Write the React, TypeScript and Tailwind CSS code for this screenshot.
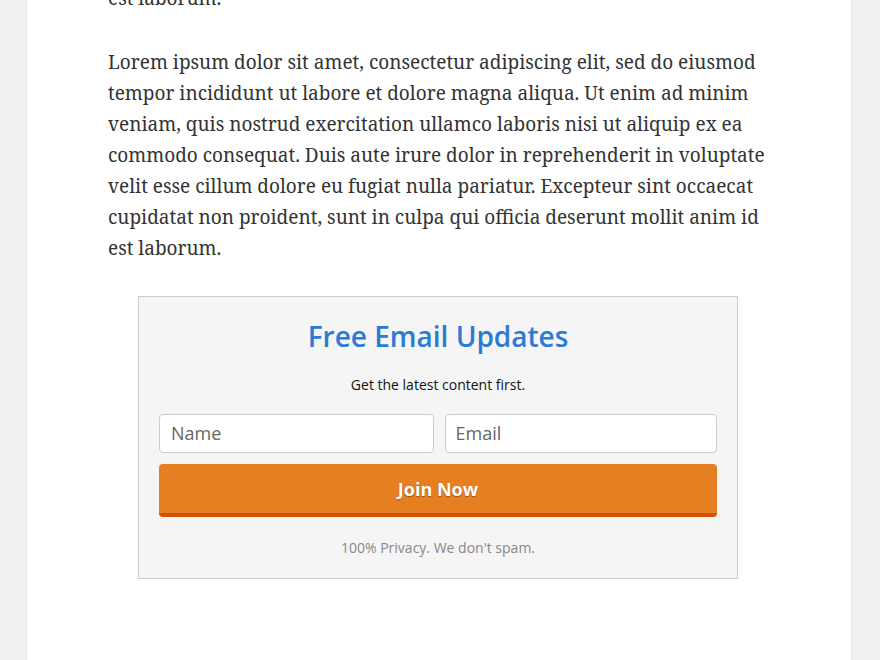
import React from "react";

const lines1 = ["est laborum."];
const lines2 = [
  "Lorem ipsum dolor sit amet, consectetur adipiscing elit, sed do eiusmod",
  "tempor incididunt ut labore et dolore magna aliqua. Ut enim ad minim",
  "veniam, quis nostrud exercitation ullamco laboris nisi ut aliquip ex ea",
  "commodo consequat. Duis aute irure dolor in reprehenderit in voluptate",
  "velit esse cillum dolore eu fugiat nulla pariatur. Excepteur sint occaecat",
  "cupidatat non proident, sunt in culpa qui officia deserunt mollit anim id",
  "est laborum.",
];

function Para({ lines, className }: { lines: string[]; className?: string }) {
  return (
    <p className={"whitespace-nowrap " + (className ?? "")}>
      {lines.map((l, i) => (
        <React.Fragment key={i}>
          {l}
          {i < lines.length - 1 && <br />}
        </React.Fragment>
      ))}
    </p>
  );
}

export default function App() {
  return (
    <div className="h-[660px] w-[880px] overflow-hidden bg-[#f1f1f1]">
      <div className="ml-[26px] flow-root h-[660px] w-[825px] border-l border-[#e6e6e6] bg-white pl-[81px] pr-[83px] shadow-[1px_0_0_#e8e8e8]">
        <div
          className="mt-[-17px] text-[19px] leading-[31px] text-[#333]"
          style={{ fontFamily: '"Noto Serif", "DejaVu Serif", serif' }}
        >
          <Para lines={lines1} className="mb-[33px]" />
          <Para lines={lines2} className="mb-[32px]" />
        </div>
        <div
          className="mx-auto w-[600px] border border-[#cccccc] bg-[#f5f5f5] px-[20px] pb-[20px] pt-[20px] text-center"
          style={{ fontFamily: '"Open Sans", sans-serif' }}
        >
          <h2 className="text-[28px] font-semibold leading-[38px] text-[#2b7bd6]">Free Email Updates</h2>
          <p className="mt-[20px] text-[14px] leading-[20px] text-[#111]">Get the latest content first.</p>
          <div className="mt-[19px] flex gap-[11px]">
            <div className="flex h-[39px] flex-1 items-center rounded-[4px] border border-[#cccccc] bg-white px-[11px] text-left text-[18px] text-[#666]">
              Name
            </div>
            <div className="flex h-[39px] flex-1 items-center rounded-[4px] border border-[#cccccc] bg-white px-[10px] text-left text-[18px] text-[#666]">
              Email
            </div>
          </div>
          <button className="mt-[11px] flex h-[53px] w-full items-center justify-center rounded-[4px] border-b-[4px] border-[#d35400] bg-[#e67e22] pt-[2px] text-[18px] font-bold text-white [text-shadow:0_1px_1px_rgba(0,0,0,0.35)]">
            Join Now
          </button>
          <p className="mt-[21px] text-[14px] leading-[20px] text-[#888]">100% Privacy. We don't spam.</p>
        </div>
      </div>
    </div>
  );
}
